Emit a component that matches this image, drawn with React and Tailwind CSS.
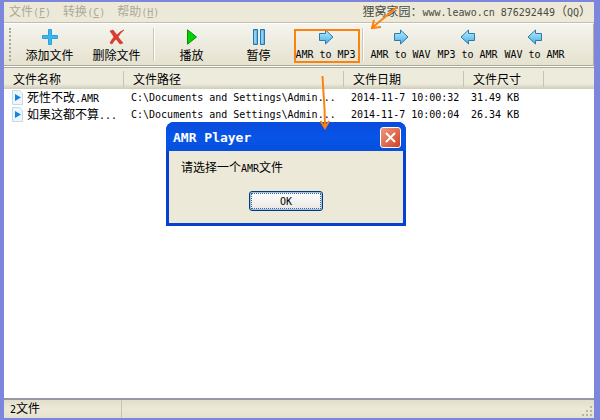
import React from 'react';

const songti = 'font-["DejaVu_Sans_Mono","Noto_Sans_CJK_SC",monospace]';

// Chinese characters are two Latin cells wide: 12px beside 10px monospace.
function Text({ children }) {
  return String(children)
    .split(/([\u3000-\u9fff\uff00-\uffef]+)/)
    .filter(Boolean)
    .map((part, i) => (
      <span key={i} className={/[\u3000-\u9fff\uff00-\uffef]/.test(part) ? 'font-["Noto_Sans_CJK_SC",sans-serif] text-[12px]' : 'text-[10px]'}>
        {part}
      </span>
    ));
}

function PlusIcon() {
  return (
    <svg width="16" height="16" viewBox="0 0 16 16" aria-hidden="true">
      <path d="M6.5 .5h3v6h6v3h-6v6h-3v-6h-6v-3h6z" fill="#36b8f0" stroke="#329fdb" />
    </svg>
  );
}

function DeleteIcon() {
  return (
    <svg width="16" height="16" viewBox="0 0 16 16" aria-hidden="true">
      <path d="M1 2l3-1 4 5q3-4 7-5-4 3-6 7l5 6-3 1-4-5q-3 3-4 5l-2-1q2-4 4-6z" fill="#e1392b" stroke="#b92318" strokeWidth=".5" />
    </svg>
  );
}

function PlayIcon() {
  return (
    <svg width="16" height="16" viewBox="0 0 16 16" aria-hidden="true">
      <path d="M3.500 .8l9 7.200-9 7.200z" fill="#00d400" stroke="#078b07" />
    </svg>
  );
}

function PauseIcon() {
  return (
    <svg width="16" height="16" viewBox="0 0 16 16" aria-hidden="true">
      <path d="M2.5 .5h4v15h-4zM9.500 .5h4v15h-4z" fill="#63bbed" stroke="#2875ad" />
      <path d="M4 2v12M11 2v12" stroke="#b4e6fc" />
    </svg>
  );
}

function ArrowIcon({ left }) {
  return (
    <svg width="16" height="16" viewBox="0 0 16 16" aria-hidden="true">
      <defs>
        <linearGradient id="arrowFill" x1="0" y1="0" x2="0" y2="1">
          <stop offset="0" stopColor="#c0eeff" />
          <stop offset="1" stopColor="#43ade5" />
        </linearGradient>
      </defs>
      <path d={left ? 'M8.500 1v3.500h6v7h-6V15L1 8z' : 'M7.500 1v3.500h-6v7h6V15L15 8z'} fill="url(#arrowFill)" stroke="#2b7aaa" />
    </svg>
  );
}

function ToolButton({ icon, label }) {
  return (
    <button type="button" className="flex w-[67px] shrink-0 flex-col items-center gap-0.5 whitespace-nowrap pt-[5px] leading-4">
      {icon}
      <span className="block h-4"><Text>{label}</Text></span>
    </button>
  );
}

function ToolDivider() {
  return <div className="mx-[3px] my-1 w-0.5 shrink-0 border-l border-r border-l-[#c9c6b4] border-r-white" />;
}

function FileIcon() {
  return (
    <svg width="11" height="15" viewBox="0 0 11 15" className="shrink-0" aria-hidden="true">
      <path d="M.5 .5h7l3 3v11H.5z" fill="#edf6fc" stroke="#c5d8e4" />
      <path d="M3 4l6 3.500-6 3.500z" fill="#1683df" />
    </svg>
  );
}

const columns = [
  ['文件名称', 'w-[120px]'],
  ['文件路径', 'w-[220px]'],
  ['文件日期', 'w-[120px]'],
  ['文件尺寸', 'w-[80px]'],
];

const files = [
  ['死性不改.AMR', 'C:\\Documents and Settings\\Admin...', '2014-11-7 10:00:32', '31.49 KB'],
  ['如果这都不算...', 'C:\\Documents and Settings\\Admin...', '2014-11-7 10:00:04', '26.34 KB'],
];

function FileTable() {
  return (
    <table className="w-full table-fixed border-collapse whitespace-nowrap text-left">
      <thead>
        <tr className="h-[21px] bg-linear-to-b from-[#edebdc] from-75% to-[#cfccb8]">
          {columns.map(([name, width]) => (
            <th key={name} scope="col" className={`${width} p-0 font-normal leading-4`}>
              <div className="flex h-4 items-center border-r border-[#c7c5b2] pl-[9px]"><Text>{name}</Text></div>
            </th>
          ))}
          <td className="p-0" />
        </tr>
      </thead>
      <tbody>
        {files.map(([name, path, date, size]) => (
          <tr key={name} className="h-[17px] leading-3">
            <td className="p-0">
              <div className="flex h-4 items-center gap-1 pl-2">
                <FileIcon />
                <span><Text>{name}</Text></span>
              </div>
            </td>
            <td className="p-0 pl-[7px]"><Text>{path}</Text></td>
            <td className="p-0 pl-[7px]"><Text>{date}</Text></td>
            <td className="p-0 pl-[7px]"><Text>{size}</Text></td>
            <td className="p-0" />
          </tr>
        ))}
      </tbody>
    </table>
  );
}

function MessageDialog() {
  return (
    <section role="dialog" aria-labelledby="dialog-title" className="absolute top-[122px] left-[166px] w-60 rounded-t-lg bg-[#0641d3] px-[3px] pb-[3px]">
      <header className="-mx-[3px] flex h-[29px] items-center justify-between rounded-t-lg bg-linear-to-b from-[#0a4bdc] via-[#0754e8] to-[#0550dc] pt-0.5 pr-[5px] pl-[7px] text-white">
        <h1 id="dialog-title" className="text-[13px] leading-4 font-bold">AMR Player</h1>
        <button type="button" aria-label="Close" className="flex size-[21px] items-center justify-center rounded-[3px] border border-white bg-linear-to-br from-[#ee987c] to-[#cf3d20]">
          <svg width="13" height="13" viewBox="0 0 13 13" aria-hidden="true">
            <path d="M2 2l9 9M11 2l-9 9" stroke="#fff" strokeWidth="2" />
          </svg>
        </button>
      </header>
      <div className="flex flex-col items-center bg-[#ece9d8] px-3 pt-2 pb-3">
        <p className="w-full leading-4"><Text>请选择一个AMR文件</Text></p>
        <button type="button" className="mt-3.5 h-5 w-[74px] rounded-[3px] border border-[#003c74] bg-linear-to-b from-white to-[#e8e7e0] p-px shadow-[inset_0_0_0_1px_#9ebcec]">
          <span className="flex h-full items-center justify-center border border-dotted border-[#3e6294] text-[10px]">OK</span>
        </button>
      </div>
    </section>
  );
}

function Annotations() {
  return (
    <svg width="420" height="135" viewBox="0 0 420 135" className="pointer-events-none absolute top-0 left-0" fill="none" stroke="#fb820d" strokeWidth="2" aria-hidden="true">
      <path d="M295 30h64v32h-64z" />
      <path d="M397 7L373 27M374 20l-2 8 9-1" />
      <path d="M322.500 76q1 18 2 32l.5 20M320.500 121l4.500 7 4-7" />
    </svg>
  );
}

export default function App() {
  return (
    <div className={`${songti} relative flex min-h-screen flex-col border-2 border-r-[6px] border-l-4 border-[#7b86dc] bg-[#ece9d8] text-[10px] text-black`}>
      <header className="flex h-[21px] items-center justify-between border-b border-[#c2bfb0] pr-[3px] leading-4 whitespace-nowrap">
        <nav className="flex gap-3 pl-[5px] text-[#aca899]">
          {[['文件', 'F'], ['转换', 'C'], ['帮助', 'H']].map(([name, key]) => (
            <button key={key} type="button" disabled>
              <Text>{name}</Text>(<u>{key}</u>)
            </button>
          ))}
        </nav>
        <p className="text-[#4b4b43]"><Text>狸窝家园：www.leawo.cn 876292449（QQ）</Text></p>
      </header>

      <div className="flex h-[43px] border-t border-r border-b border-t-white border-r-[#b5b2a2] border-b-[#a8aa94] bg-linear-to-b from-[#f5f4ee] to-[#e5e2cf]">
        <div className="w-3 shrink-0 py-1 pl-[5px]">
          <div className="h-full w-0 border-l-2 border-dotted border-[#aaa798]" />
        </div>
        <ToolButton icon={<PlusIcon />} label="添加文件" />
        <ToolButton icon={<DeleteIcon />} label="删除文件" />
        <ToolDivider />
        <ToolButton icon={<PlayIcon />} label="播放" />
        <ToolButton icon={<PauseIcon />} label="暂停" />
        <ToolButton icon={<ArrowIcon />} label="AMR to MP3" />
        <ToolDivider />
        <ToolButton icon={<ArrowIcon />} label="AMR to WAV" />
        <ToolButton icon={<ArrowIcon left />} label="MP3 to AMR" />
        <ToolButton icon={<ArrowIcon left />} label="WAV to AMR" />
      </div>

      <main className="flex-1 border-t border-b-2 border-t-white border-b-[#9698a2] bg-white">
        <div className="border-t border-[#aaa99d]">
          <FileTable />
        </div>
      </main>

      <footer className="flex h-[18px] items-center bg-linear-to-b from-[#e1decb] via-[#ece9d8] to-[#e5e2cf] leading-4">
        <span className="w-[118px] border-r border-[#c7c5b2] pl-1.5"><Text>2文件</Text></span>
        <svg width="12" height="12" viewBox="0 0 12 12" className="ml-auto self-end" fill="#b8b4a0" aria-hidden="true">
          <path d="M8 0h2v2H8zM8 4h2v2H8zM8 8h2v2H8zM4 4h2v2H4zM4 8h2v2H4zM0 8h2v2H0z" />
        </svg>
      </footer>

      {/* The dialog and pointers share the window's outer coordinates. */}
      <div className="absolute -top-0.5 -left-1">
        <MessageDialog />
        <Annotations />
      </div>
    </div>
  );
}
